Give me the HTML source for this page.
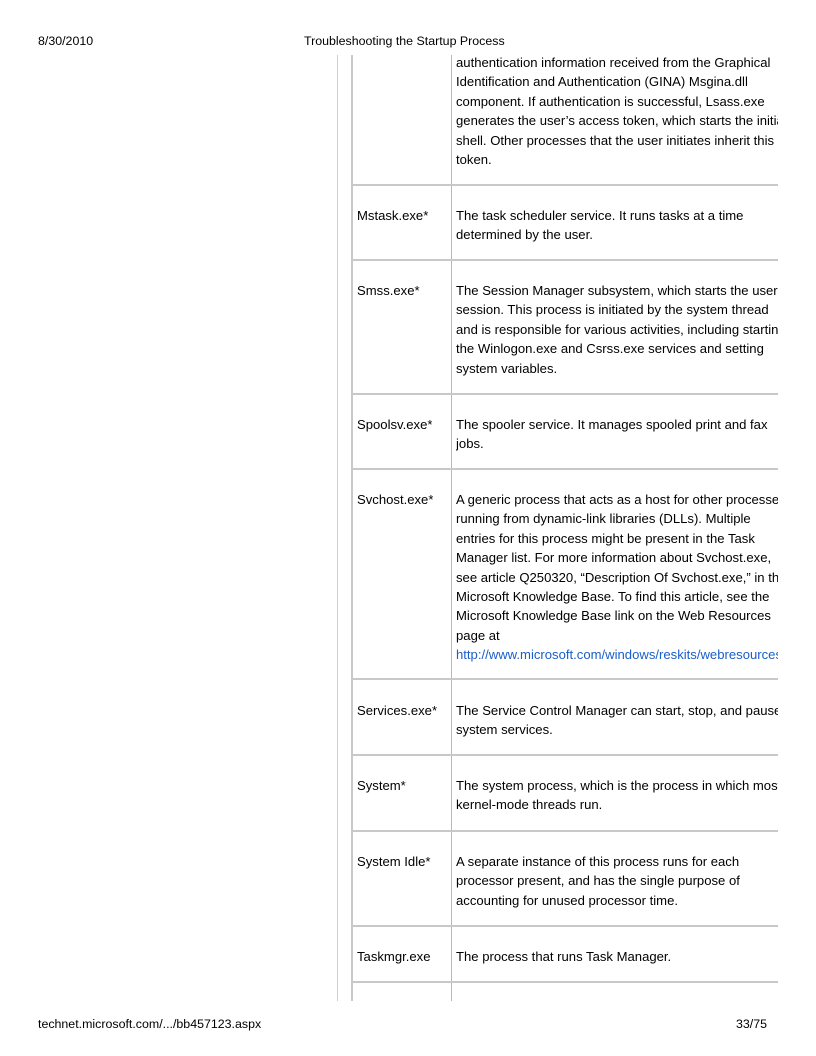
<!DOCTYPE html>
<html><head><meta charset="utf-8"><style>
body{margin:0;width:816px;height:1056px;position:relative;background:#fff;font-family:"Liberation Sans",sans-serif;color:#000;overflow:hidden}
.h{position:absolute;font-size:12.4px;top:34px}
.t{position:absolute;font-size:13.1px;line-height:19.4px;white-space:nowrap;overflow:hidden}
.c2{left:456px;width:322px}
.c1{left:357px}
.hl{position:absolute;left:351px;width:427px;height:2px;background:#c8c8c8}
a{color:#1a5fc8;text-decoration:none}
</style></head><body>
<div class="h" style="left:38px">8/30/2010</div>
<div class="h" style="left:304px">Troubleshooting the Startup Process</div>
<div class="h" style="left:38px;top:1017px">technet.microsoft.com/.../bb457123.aspx</div>
<div class="h" style="left:736px;top:1017px">33/75</div>
<div style="position:absolute;left:337px;top:55px;width:1px;height:946px;background:#d0d0d0"></div>
<div style="position:absolute;left:351px;top:55px;width:2px;height:946px;background:#c8c8c8"></div>
<div style="position:absolute;left:451px;top:55px;width:1px;height:946px;background:#b8b8b8"></div>
<div class="hl" style="top:184px"></div><div class="hl" style="top:259px"></div><div class="hl" style="top:393px"></div><div class="hl" style="top:468px"></div><div class="hl" style="top:678px"></div><div class="hl" style="top:754px"></div><div class="hl" style="top:830px"></div><div class="hl" style="top:925px"></div><div class="hl" style="top:981px"></div>
<div class="t c2" style="top:53px">authentication information received from the Graphical<br>Identification and Authentication (GINA) Msgina.dll<br>component. If authentication is successful, Lsass.exe<br>generates the user’s access token, which starts the initial<br>shell. Other processes that the user initiates inherit this<br>token.</div>
<div class="t c1" style="top:206px">Mstask.exe*</div>
<div class="t c2" style="top:206px">The task scheduler service. It runs tasks at a time<br>determined by the user.</div>
<div class="t c1" style="top:281px">Smss.exe*</div>
<div class="t c2" style="top:281px">The Session Manager subsystem, which starts the user<br>session. This process is initiated by the system thread<br>and is responsible for various activities, including starting<br>the Winlogon.exe and Csrss.exe services and setting<br>system variables.</div>
<div class="t c1" style="top:415px">Spoolsv.exe*</div>
<div class="t c2" style="top:415px">The spooler service. It manages spooled print and fax<br>jobs.</div>
<div class="t c1" style="top:490px">Svchost.exe*</div>
<div class="t c2" style="top:490px">A generic process that acts as a host for other processes<br>running from dynamic-link libraries (DLLs). Multiple<br>entries for this process might be present in the Task<br>Manager list. For more information about Svchost.exe,<br>see article Q250320, “Description Of Svchost.exe,” in the<br>Microsoft Knowledge Base. To find this article, see the<br>Microsoft Knowledge Base link on the Web Resources<br>page at<br><a>http://www.microsoft.com/windows/reskits/webresources</a></div>
<div class="t c1" style="top:701px">Services.exe*</div>
<div class="t c2" style="top:701px">The Service Control Manager can start, stop, and pause<br>system services.</div>
<div class="t c1" style="top:776px">System*</div>
<div class="t c2" style="top:776px">The system process, which is the process in which most<br>kernel-mode threads run.</div>
<div class="t c1" style="top:852px">System Idle*</div>
<div class="t c2" style="top:852px">A separate instance of this process runs for each<br>processor present, and has the single purpose of<br>accounting for unused processor time.</div>
<div class="t c1" style="top:947px">Taskmgr.exe</div>
<div class="t c2" style="top:947px">The process that runs Task Manager.</div>
</body></html>
